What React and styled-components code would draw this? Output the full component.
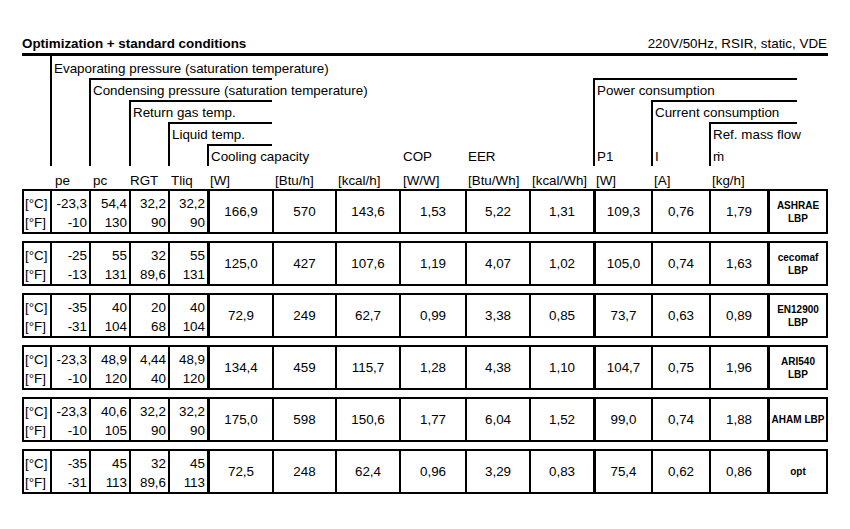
import React from 'react'
import styled, { createGlobalStyle } from 'styled-components'

const GlobalStyle = createGlobalStyle`
  html, body {
    margin: 0;
    padding: 0;
    background: #fff;
  }
  body {
    font-family: "Liberation Sans", Arial, sans-serif;
    color: #000;
  }
`

// column widths of the sheet, outer border not included
const COLS = [28, 39, 40, 39, 39, 65, 63, 64, 66, 64, 64, 58, 58, 58, 61]
const headCols = COLS.map(w => w + 'px').join(' ')
const blockCols = COLS.map((w, i) => (i === 0 || i === COLS.length - 1 ? w - 2 : w) + 'px').join(' ')

const THICK_BEFORE = [5, 11, 14]

const Page = styled.div`
  width: 806px;
  padding: 36px 22px 0 22px;
  font-size: 13.4px;
`

const TitleBar = styled.div`
  display: flex;
  justify-content: space-between;
  align-items: flex-end;
  line-height: 15px;
  padding-bottom: 2px;
  border-bottom: 3px solid #000;
`

const Title = styled.div`
  font-weight: bold;
`

const Conditions = styled.div`
  padding-right: 1px;
`

const Legend = styled.div`
  display: grid;
  grid-template-columns: ${headCols};
  grid-template-rows: repeat(5, 22px) 23px;
  white-space: nowrap;
`

const Bracket = styled.div`
  grid-column: ${p => p.$from} / ${p => p.$to};
  grid-row: ${p => p.$row} / 6;
  margin-right: ${p => p.$cut || 0}px;
  border-left: 2px solid #000;
  border-top: ${p => (p.$open ? 'none' : '2px solid #000')};
  padding: ${p => (p.$open ? '2px' : '0')} 0 0 2px;
  line-height: 22px;
`

const Caption = styled.div`
  grid-column: ${p => p.$col};
  grid-row: ${p => p.$row};
  padding: 2px 0 0 ${p => p.$pad}px;
  line-height: 22px;
`

const Unit = styled.div`
  grid-row: 6;
  padding: 4px 0 0 ${p => p.$pad}px;
  line-height: 22px;
`

const Block = styled.div`
  display: grid;
  grid-template-columns: ${blockCols};
  grid-template-rows: 21px 20px;
  border: 2px solid #000;
  margin-bottom: 7px;
`

const Cell = styled.div`
  box-sizing: border-box;
  grid-column: ${p => p.$col};
  grid-row: ${p => p.$row};
  border-left: ${p => (p.$col === 1 ? 'none' : p.$thick ? '3px solid #000' : '2px solid #000')};
  display: flex;
  align-items: center;
  justify-content: ${p => p.$align};
  padding: ${p => (p.$row === 1 ? '4px' : '1px')} 2px 0 ${p => (p.$col === 1 ? '1px' : '2px')};
  line-height: 16px;
  white-space: nowrap;
`

const Standard = styled(Cell)`
  flex-direction: column;
  justify-content: center;
  align-items: center;
  text-align: center;
  font-size: 10px;
  font-weight: bold;
  line-height: 13px;
  padding: 0;
`

const units = [
  ['', 0], ['pe', 5], ['pc', 4], ['RGT', 1], ['Tliq', 3], ['[W]', 3], ['[Btu/h]', 3], ['[kcal/h]', 3],
  ['[W/W]', 4], ['[Btu/Wh]', 3], ['[kcal/Wh]', 3], ['[W]', 3], ['[A]', 3], ['[kg/h]', 3], ['', 0]
]

const rows = [
  { c: ['-23,3', '54,4', '32,2', '32,2'], f: ['-10', '130', '90', '90'], v: ['166,9', '570', '143,6', '1,53', '5,22', '1,31', '109,3', '0,76', '1,79'], std: ['ASHRAE', 'LBP'] },
  { c: ['-25', '55', '32', '55'], f: ['-13', '131', '89,6', '131'], v: ['125,0', '427', '107,6', '1,19', '4,07', '1,02', '105,0', '0,74', '1,63'], std: ['cecomaf', 'LBP'] },
  { c: ['-35', '40', '20', '40'], f: ['-31', '104', '68', '104'], v: ['72,9', '249', '62,7', '0,99', '3,38', '0,85', '73,7', '0,63', '0,89'], std: ['EN12900', 'LBP'] },
  { c: ['-23,3', '48,9', '4,44', '48,9'], f: ['-10', '120', '40', '120'], v: ['134,4', '459', '115,7', '1,28', '4,38', '1,10', '104,7', '0,75', '1,96'], std: ['ARI540', 'LBP'] },
  { c: ['-23,3', '40,6', '32,2', '32,2'], f: ['-10', '105', '90', '90'], v: ['175,0', '598', '150,6', '1,77', '6,04', '1,52', '99,0', '0,74', '1,88'], std: ['AHAM LBP'] },
  { c: ['-35', '45', '32', '45'], f: ['-31', '113', '89,6', '113'], v: ['72,5', '248', '62,4', '0,96', '3,29', '0,83', '75,4', '0,62', '0,86'], std: ['opt'] }
]

const ResultBlock = ({ row }) => (
  <Block>
    <Cell $col={1} $row={1} $align="flex-start">[°C]</Cell>
    <Cell $col={1} $row={2} $align="flex-start">[°F]</Cell>
    {row.c.map((t, i) => (
      <Cell key={'c' + i} $col={i + 2} $row={1} $align="flex-end">{t}</Cell>
    ))}
    {row.f.map((t, i) => (
      <Cell key={'f' + i} $col={i + 2} $row={2} $align="flex-end">{t}</Cell>
    ))}
    {row.v.map((t, i) => (
      <Cell key={'v' + i} $col={i + 6} $row="1 / 3" $align="center" $thick={THICK_BEFORE.includes(i + 5)}>
        {t}
      </Cell>
    ))}
    <Standard $col={15} $row="1 / 3" $thick>
      {row.std.map(s => <span key={s}>{s}</span>)}
    </Standard>
  </Block>
)

export default function App() {
  return (
    <Page>
      <GlobalStyle />
      <TitleBar>
        <Title>Optimization + standard conditions</Title>
        <Conditions>220V/50Hz, RSIR, static, VDE</Conditions>
      </TitleBar>

      <Legend>
        <Bracket $from={2} $to={7} $row={1} $open>Evaporating pressure (saturation temperature)</Bracket>
        <Bracket $from={3} $to={7} $row={2}>Condensing pressure (saturation temperature)</Bracket>
        <Bracket $from={4} $to={7} $row={3}>Return gas temp.</Bracket>
        <Bracket $from={5} $to={7} $row={4}>Liquid temp.</Bracket>
        <Bracket $from={6} $to={7} $row={5}>Cooling capacity</Bracket>
        <Caption $col={9} $row={5} $pad={4}>COP</Caption>
        <Caption $col={10} $row={5} $pad={3}>EER</Caption>
        <Bracket $from={12} $to={16} $row={2} $cut={31}>Power consumption</Bracket>
        <Bracket $from={13} $to={16} $row={3} $cut={31}>Current consumption</Bracket>
        <Bracket $from={14} $to={16} $row={4} $cut={31}>Ref. mass flow</Bracket>
        <Caption $col={12} $row={5} $pad={4}>P1</Caption>
        <Caption $col={13} $row={5} $pad={4}>I</Caption>
        <Caption $col={14} $row={5} $pad={4}>ṁ</Caption>
        {units.map(([t, pad], i) => (
          <Unit key={i} $pad={pad} style={{ gridColumn: i + 1 }}>{t}</Unit>
        ))}
      </Legend>

      {rows.map((row, i) => <ResultBlock key={i} row={row} />)}
    </Page>
  )
}
